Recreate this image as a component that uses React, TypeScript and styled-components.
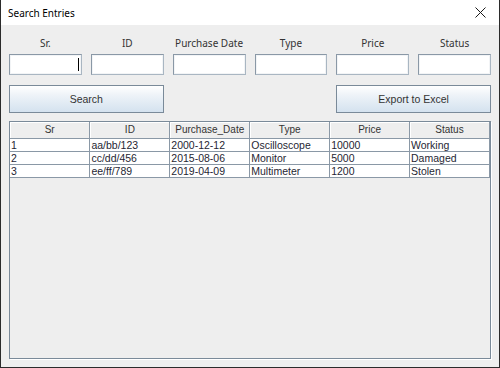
import React from "react";
import styled, { createGlobalStyle } from "styled-components";

const GlobalStyle = createGlobalStyle`
  html, body {
    margin: 0;
    padding: 0;
    background: #eeeeee;
  }
  * {
    box-sizing: border-box;
  }
`;

const labels = ["Sr.", "ID", "Purchase Date", "Type", "Price", "Status"];
const columns = ["Sr", "ID", "Purchase_Date", "Type", "Price", "Status"];
const rows = [
  ["1", "aa/bb/123", "2000-12-12", "Oscilloscope", "10000", "Working"],
  ["2", "cc/dd/456", "2015-08-06", "Monitor", "5000", "Damaged"],
  ["3", "ee/ff/789", "2019-04-09", "Multimeter", "1200", "Stolen"],
];

export default function App() {
  return (
    <>
      <GlobalStyle />
      <Window>
        <TitleBar>
          <Title>Search Entries</Title>
          <CloseButton>
            <svg width="11" height="11" viewBox="0 0 11 11">
              <path d="M0.5 0.5 L10.5 10.5 M10.5 0.5 L0.5 10.5" stroke="#1a1a1a" strokeWidth="1" />
            </svg>
          </CloseButton>
        </TitleBar>
        <Content>
          <FormGrid>
            {labels.map((l) => (
              <Label key={l}>{l}</Label>
            ))}
            {labels.map((l, i) => (
              <Field key={l}>{i === 0 && <Caret />}</Field>
            ))}
          </FormGrid>
          <ButtonRow>
            <Button $col="1 / 3">Search</Button>
            <Button $col="5 / 7">Export to Excel</Button>
          </ButtonRow>
          <ScrollPane>
            <Table>
              <thead>
                <tr>
                  {columns.map((c) => (
                    <Th key={c}>{c}</Th>
                  ))}
                </tr>
              </thead>
              <tbody>
                {rows.map((r) => (
                  <tr key={r[0]}>
                    {r.map((v, i) => (
                      <Td key={i}>{v}</Td>
                    ))}
                  </tr>
                ))}
              </tbody>
            </Table>
          </ScrollPane>
        </Content>
      </Window>
    </>
  );
}

const Window = styled.div`
  width: 500px;
  height: 368px;
  display: flex;
  flex-direction: column;
  border: 1px solid #2b2b2b;
  border-top: none;
  background: #eeeeee;
`;

const TitleBar = styled.div`
  height: 25px;
  flex: none;
  display: flex;
  align-items: center;
  justify-content: space-between;
  background: #ffffff;
  padding: 0 13px 0 7px;
`;

const Title = styled.div`
  font-family: "Noto Sans", "Open Sans", sans-serif;
  font-size: 10px;
  color: #000;
  padding-top: 1px;
`;

const CloseButton = styled.div`
  width: 11px;
  height: 11px;
  display: flex;
`;

const Content = styled.div`
  flex: 1;
  display: flex;
  flex-direction: column;
  padding: 11px 8px 8px 8px;
  min-height: 0;
`;

const FormGrid = styled.div`
  display: grid;
  grid-template-columns: repeat(6, 1fr);
  grid-template-rows: 14px 21px;
  column-gap: 9px;
  row-gap: 4px;
`;

const ButtonRow = styled.div`
  display: grid;
  grid-template-columns: repeat(6, 1fr);
  column-gap: 9px;
  margin-top: 10px;
`;

const Label = styled.div`
  font-family: "Noto Sans", "Open Sans", sans-serif;
  font-size: 10px;
  line-height: 14px;
  color: #333333;
  text-align: center;
`;

const Field = styled.div`
  height: 21px;
  background: #ffffff;
  border: 1px solid #8a98a6;
  border-right-color: #a9b6c2;
  border-bottom-color: #a9b6c2;
  box-shadow: inset 0 0 0 1px #f2f4f6;
  display: flex;
  align-items: center;
  justify-content: flex-end;
  padding-right: 2px;
`;

const Caret = styled.span`
  width: 1px;
  height: 13px;
  background: #000;
`;

const Button = styled.button<{ $col: string }>`
  grid-column: ${(p) => p.$col};
  height: 28px;
  margin: 0;
  padding: 0;
  border: 1px solid #7a8a99;
  background: linear-gradient(to bottom, #ffffff 0%, #eef3f8 35%, #d4e2ef 100%);
  font-family: "Liberation Sans", Arial, sans-serif;
  font-size: 10.5px;
  color: #333333;
  cursor: pointer;
`;

const ScrollPane = styled.div`
  margin-top: 8px;
  flex: 1;
  min-height: 0;
  border: 1px solid #7a8a99;
  box-shadow: 1px 1px 0 #ffffff;
  background: #eeeeee;
  overflow: hidden;
`;

const Table = styled.table`
  width: 480px;
  border-collapse: collapse;
  table-layout: fixed;
  font-family: "Liberation Sans", Arial, sans-serif;
  color: #333333;
`;

const Th = styled.th`
  height: 16px;
  padding: 0;
  font-size: 10px;
  font-weight: normal;
  text-align: center;
  background: #eeeeee;
  border-right: 1px solid #8a98a6;
  border-bottom: 1px solid #8a98a6;
  box-shadow: inset 1px 1px 0 #ffffff;
`;

const Td = styled.td`
  height: 13px;
  padding: 0 0 0 1px;
  font-size: 10.5px;
  line-height: 12px;
  background: #ffffff;
  color: #1f1f33;
  border-right: 1px solid #8a98a6;
  border-bottom: 1px solid #8a98a6;
  white-space: nowrap;
  overflow: hidden;
`;
